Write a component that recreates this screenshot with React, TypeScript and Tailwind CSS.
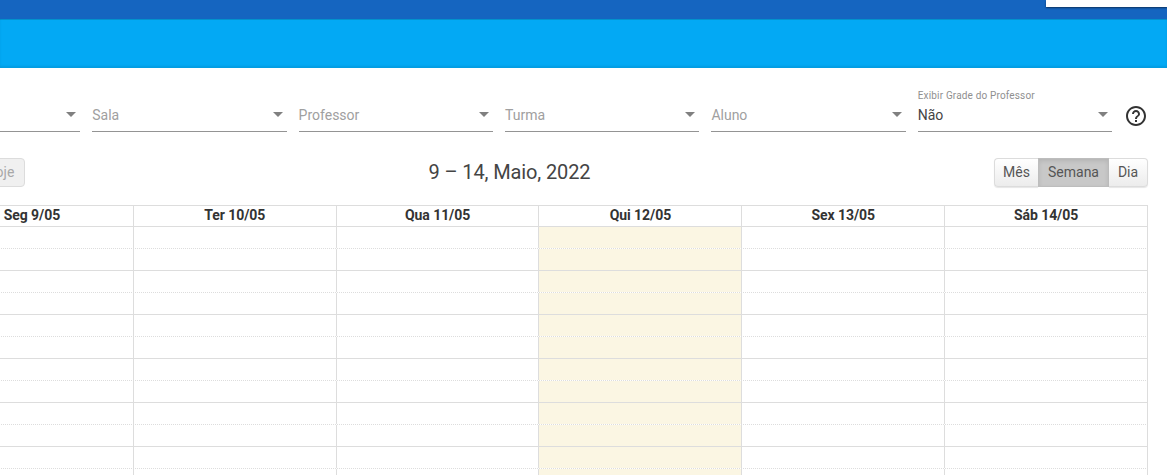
const filters = [
  { label: "" },
  { label: "Sala" },
  { label: "Professor" },
  { label: "Turma" },
  { label: "Aluno" },
]

const days = ["Seg 9/05", "Ter 10/05", "Qua 11/05", "Qui 12/05", "Sex 13/05", "Sáb 14/05"]
const rows = Array.from({ length: 12 }, (_, i) => i)

const Caret = () => (
  <span className="absolute right-[4px] top-[22px] w-0 h-0 border-x-[5px] border-x-transparent border-t-[5px] border-t-[#808080]" />
)

const SelectField = ({ label, value, small }: { label?: string; value?: string; small?: string }) => (
  <div className="relative w-[194.4px] shrink-0 h-[42px] border-b border-[#949494]">
    {small && <div className="absolute left-0 top-0 text-[10px] leading-[12px] tracking-[0.16px] text-[#8f8f8f] whitespace-nowrap">{small}</div>}
    <div className={`absolute left-0 top-[16px] text-[14px] leading-[18px] ${value ? "text-[#444]" : "text-[#a0a0a0]"}`}>
      {value || label}
    </div>
    <Caret />
  </div>
)

const btn = "h-[29px] border border-[#dcdcdc] text-[14px] text-[#555] flex items-center justify-center bg-gradient-to-b from-white to-[#ececec] shadow-[0_1px_1px_rgba(0,0,0,0.1)]"

export default function App() {
  return (
    <div className="h-screen overflow-hidden bg-white font-['Roboto',sans-serif]">
      <div className="h-[68px]">
        <div className="h-[19px] bg-[#1565c0] flex justify-end">
          <div className="w-[121px] h-[7px] bg-white shadow-[0_1px_2px_rgba(0,0,0,0.5)]" />
        </div>
        <div className="h-[49px] bg-[#03a9f4] shadow-[inset_0_1px_0_rgba(0,80,90,0.25),inset_0_-2px_2px_rgba(0,0,0,0.08)]" />
      </div>

      <div className="flex items-start gap-[12px] ml-[-114.2px] mt-[22px] w-[1300px]">
        {filters.map((f, i) => (
          <SelectField key={i} label={f.label} />
        ))}
        <SelectField small="Exibir Grade do Professor" value="Não" />
        <svg className="mt-[14px] shrink-0" width="24" height="24" viewBox="0 0 24 24" fill="#333333">
          <path d="M11 18h2v-2h-2v2zm1-16C6.48 2 2 6.48 2 12s4.48 10 10 10 10-4.48 10-10S17.52 2 12 2zm0 18c-4.41 0-8-3.59-8-8s3.59-8 8-8 8 3.59 8 8-3.59 8-8 8zm0-14c-2.21 0-4 1.79-4 4h2c0-1.1.9-2 2-2s2 .9 2 2c0 2-3 1.75-3 5h2c0-2.25 3-2.5 3-5 0-2.21-1.79-4-4-4z" />
        </svg>
      </div>

      <div className="ml-[-70px] w-[1218px] mt-[26px] flex items-center justify-between h-[29px]">
        <div className="flex w-[95px] justify-between">
          <div className="w-[40px]" />
          <div className="w-[50px] h-[29px] border border-[#dcdcdc] rounded-[4px] bg-[#f0f0f0] text-[14px] text-[#a8a8a8] flex items-center justify-center">
            Hoje
          </div>
        </div>
        <div className="text-[20px] leading-[29px] tracking-[-0.12px] text-[#444] w-[162px] whitespace-nowrap">9 – 14, Maio, 2022</div>
        <div className="flex w-[154px]">
          <div className={`${btn} w-[44px] rounded-l-[4px] border-r-0`}>Mês</div>
          <div className="w-[71px] h-[29px] border border-[#bdbdbd] bg-[#c8c8c8] shadow-[inset_0_2px_4px_rgba(0,0,0,0.1)] text-[14px] text-[#555] flex items-center justify-center">
            Semana
          </div>
          <div className={`${btn} w-[39px] rounded-r-[4px] border-l-0`}>Dia</div>
        </div>
      </div>

      <div className="ml-[-70px] w-[1218px] mt-[18px] border-t border-l border-[#dddddd]">
        <div className="grid grid-cols-6 h-[21px] border-b border-[#dddddd]">
          {days.map((d) => (
            <div key={d} className="border-r border-[#dddddd] text-center text-[14px] leading-[19px] font-bold tracking-[-0.05px] text-[#333]">
              {d}
            </div>
          ))}
        </div>
        {rows.map((r) => (
          <div
            key={r}
            className={`grid grid-cols-6 h-[22px] border-b border-[#dddddd] ${r % 2 === 0 ? "border-dotted" : "border-solid"}`}
          >
            {days.map((d, i) => (
              <div key={d} className={`border-r border-[#dddddd] ${i === 3 ? "bg-[#fbf6e3]" : ""}`} />
            ))}
          </div>
        ))}
      </div>
    </div>
  )
}
